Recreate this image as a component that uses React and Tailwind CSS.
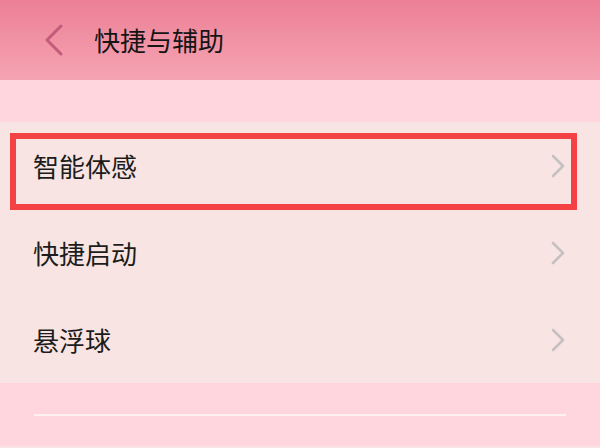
const font = { fontFamily: '"Noto Sans CJK SC", "Noto Sans", sans-serif' }

function Chevron() {
    return (
        <svg width="16" height="24" viewBox="0 0 16 24" className="shrink-0">
            <path d="M3 2 L13 12 L3 22" fill="none" stroke="#c6c1c1" strokeWidth="2.6" strokeLinecap="round" strokeLinejoin="round" />
        </svg>
    )
}

const items = ['智能体感', '快捷启动', '悬浮球']

export default function App() {
    return (
        <div className="w-[600px] h-[448px] overflow-hidden flex flex-col bg-[#f8e5e3]" style={font}>
            <div className="h-[80px] shrink-0 flex items-center bg-gradient-to-b from-[#ec7f96] to-[#f5a4b3]">
                <svg width="22" height="34" viewBox="0 0 22 34" className="ml-[43px]">
                    <path d="M18 3 L4 17 L18 31" fill="none" stroke="#c35c7a" strokeWidth="3" strokeLinecap="round" strokeLinejoin="round" />
                </svg>
                <h1 className="ml-[29px] text-[26px] leading-none text-[#151515]">快捷与辅助</h1>
            </div>
            <div className="h-[42px] shrink-0 bg-[#ffd6dd]" />
            <div className="relative shrink-0">
                {items.map(t => (
                    <div key={t} className="h-[87px] flex items-center justify-between pl-[33px] pr-[34px]">
                        <span className="text-[26px] leading-none text-[#1c1c1c]">{t}</span>
                        <Chevron />
                    </div>
                ))}
                <div className="absolute left-[10px] top-[11px] w-[567px] h-[77px] border-[6px] border-[#f44244]" />
            </div>
            <div className="h-[63px] shrink-0 bg-[#ffd6dd] flex items-center px-[34px]">
                <div className="h-[2px] w-full bg-[#fff0f2]" />
            </div>
        </div>
    )
}
